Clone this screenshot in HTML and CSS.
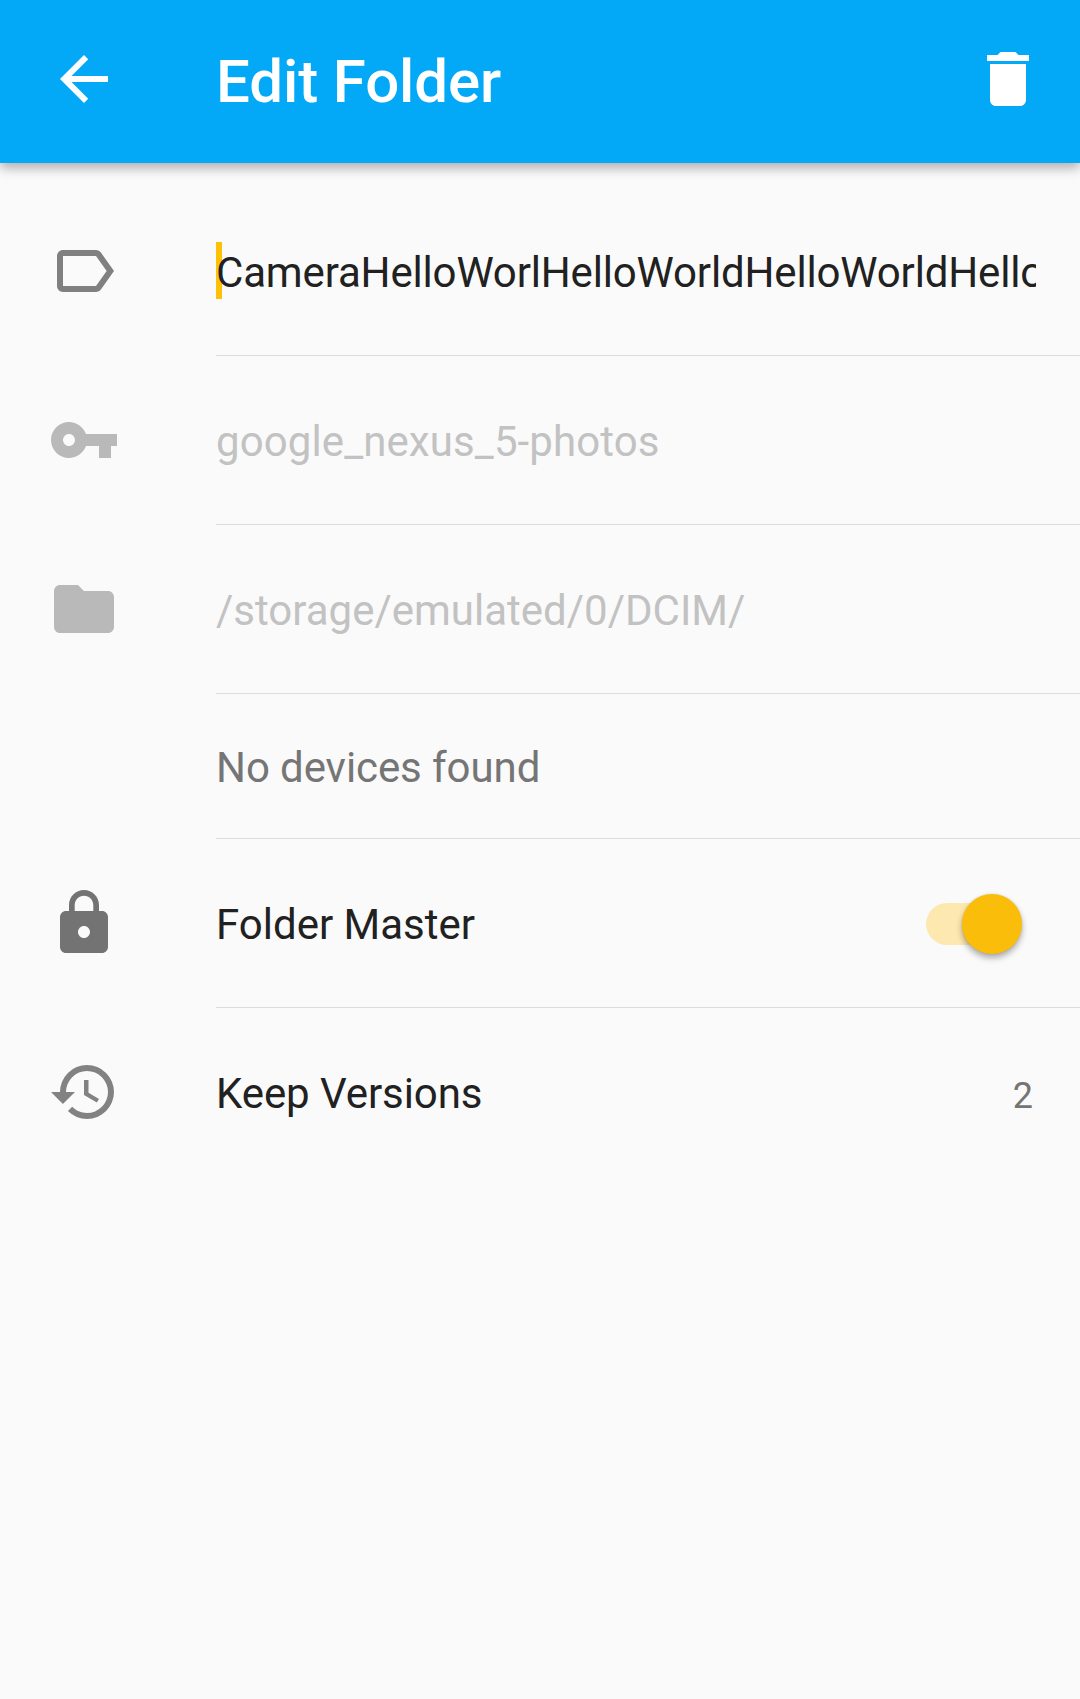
FILE: index.html
```html
<!DOCTYPE html>
<html lang="en">
<head>
<meta charset="utf-8">
<title>Edit Folder</title>
<link rel="stylesheet" href="styles.css">
</head>
<body>
<header class="toolbar">
  <svg class="icon" viewBox="0 0 24 24"><path d="M20 11H7.83l5.59-5.59L12 4l-8 8 8 8 1.41-1.41L7.83 13H20v-2z"/></svg>
  <h1 class="title">Edit Folder</h1>
  <svg class="icon" viewBox="0 0 24 24"><path d="M6 19c0 1.100.9 2 2 2h8c1.100 0 2-.9 2-2V7H6v12zM19 4h-3.500l-1-1h-5l-1 1H5v2h14V4z"/></svg>
</header>
<main class="form">
  <div class="row">
    <svg class="icon icon-label" viewBox="0 0 24 24"><path d="M17.630 5.840C17.270 5.330 16.670 5 16 5L5 5.010C3.900 5.010 3 5.900 3 7v10c0 1.100.9 1.990 2 1.990L16 19c.67 0 1.270-.33 1.630-.84L22 12l-4.370-6.160zM16 17H5V7h11l3.550 5L16 17z"/></svg>
    <div class="content"><div class="input"><span class="caret"></span><span class="value">CameraHelloWorlHelloWorldHelloWorldHello</span></div></div>
  </div>
  <div class="row disabled">
    <svg class="icon" viewBox="0 0 24 24"><path d="M12.650 10C11.830 7.670 9.610 6 7 6c-3.310 0-6 2.690-6 6s2.690 6 6 6c2.610 0 4.830-1.670 5.650-4H17v4h4v-4h2v-4H12.650zM7 14c-1.100 0-2-.9-2-2s.9-2 2-2 2 .9 2 2-.9 2-2 2z"/></svg>
    <div class="content"><span class="text text-id">google_nexus_5-photos</span></div>
  </div>
  <div class="row disabled">
    <svg class="icon" viewBox="0 0 24 24"><path d="M10 4H4c-1.100 0-1.990.9-1.990 2L2 18c0 1.100.9 2 2 2h16c1.100 0 2-.9 2-2V8c0-1.100-.9-2-2-2h-8l-2-2z"/></svg>
    <div class="content"><span class="text">/storage/emulated/0/DCIM/</span></div>
  </div>
  <div class="row row-devices">
    <div class="content"><span class="text text-tight">No devices found</span></div>
  </div>
  <div class="row">
    <svg class="icon icon-lock" viewBox="0 0 24 24"><path d="M18 8h-1V6c0-2.760-2.240-5-5-5S7 3.240 7 6v2H6c-1.100 0-2 .9-2 2v10c0 1.100.9 2 2 2h12c1.100 0 2-.9 2-2V10c0-1.100-.9-2-2-2zm-6 9c-1.100 0-2-.9-2-2s.9-2 2-2 2 .9 2 2-.9 2-2 2zm3.100-9H8.900V6c0-1.710 1.390-3.100 3.100-3.100s3.100 1.390 3.100 3.100v2z"/></svg>
    <div class="content"><span class="text">Folder Master</span><div class="switch"><div class="thumb"></div></div></div>
  </div>
  <div class="row">
    <svg class="icon icon-history" viewBox="0 0 24 24"><path d="M13 3a9 9 0 0 0-9 9H1l3.890 3.890.07.14L9 12H6a7 7 0 1 1 7 7c-1.930 0-3.680-.79-4.940-2.060l-1.420 1.420A8.950 8.950 0 0 0 13 21a9 9 0 0 0 0-18zm-1 5v5l4.280 2.540.72-1.210-3.500-2.080V8H12z"/></svg>
    <div class="content"><span class="text text-tight">Keep Versions</span><span class="count">2</span></div>
  </div>
</main>
</body>
</html>
```
FILE: styles.css
```css
* { box-sizing: border-box; }
body {
  margin: 0;
  min-height: 1699px;
  background: #fafafa;
  color: #212121;
  font-family: Roboto, "Liberation Sans", sans-serif;
  font-size: 42px;
  overflow: hidden;
}
.toolbar {
  display: flex;
  align-items: center;
  height: 163px;
  padding: 0 36px 5px 48px;
  background: #03a9f7;
  color: #fff;
  box-shadow: 0 5px 11px rgba(0, 0, 0, .3);
}
.icon {
  flex: none;
  width: 72px;
  height: 72px;
  fill: currentColor;
}
.title {
  flex: 1;
  margin: 0 0 0 96px;
  padding-top: 6px;
  font-size: 60px;
  font-weight: 500;
  letter-spacing: -.1px;
  line-height: 70px;
}
.form { padding-top: 24px; }
.row {
  display: flex;
  align-items: center;
  height: 169px;
  padding-left: 48px;
}
.row .icon { margin-bottom: 1px; }
.icon-label { color: #808080; }
.icon-lock { color: #737373; }
.icon-history { color: #828282; }
.disabled .icon { color: #b9b9b9; }
.content {
  display: flex;
  flex: 1;
  align-items: center;
  justify-content: space-between;
  min-width: 0;
  height: 100%;
  margin-left: 96px;
  padding-right: 44px;
  border-bottom: 1px solid #dcdcdc;
}
.row:last-child .content { border-bottom-color: transparent; }
.text, .value {
  padding-top: 3px;
  line-height: 50px;
  white-space: nowrap;
}
.text-id { letter-spacing: .1px; }
.text-tight { letter-spacing: -.08px; }
.input {
  position: relative;
  display: flex;
  align-items: center;
  width: 100%;
  height: 57px;
  margin-bottom: 1px;
  overflow: hidden;
}
.caret {
  position: absolute;
  top: 0;
  left: 0;
  width: 6px;
  height: 57px;
  background: #ffc107;
}
.value {
  position: relative;
  padding-top: 4px;
  letter-spacing: -.16px;
}
.disabled .text { color: #c2c2c2; }
.row-devices {
  height: 145px;
  padding-left: 120px;
  color: #757575;
}
.switch {
  display: flex;
  align-items: center;
  justify-content: flex-end;
  width: 84px;
  height: 42px;
  margin: 2px 26px 0 0;
  border-radius: 21px;
  background: #fde8b0;
}
.thumb {
  flex: none;
  width: 60px;
  height: 60px;
  margin-right: -12px;
  border-radius: 50%;
  background: #fabe0a;
  box-shadow: 0 4px 6px rgba(0, 0, 0, .32), 0 0 2px rgba(0, 0, 0, .12);
}
.count {
  padding: 8px 3px 0 0;
  color: #757575;
  font-size: 36px;
  line-height: 44px;
}
```
